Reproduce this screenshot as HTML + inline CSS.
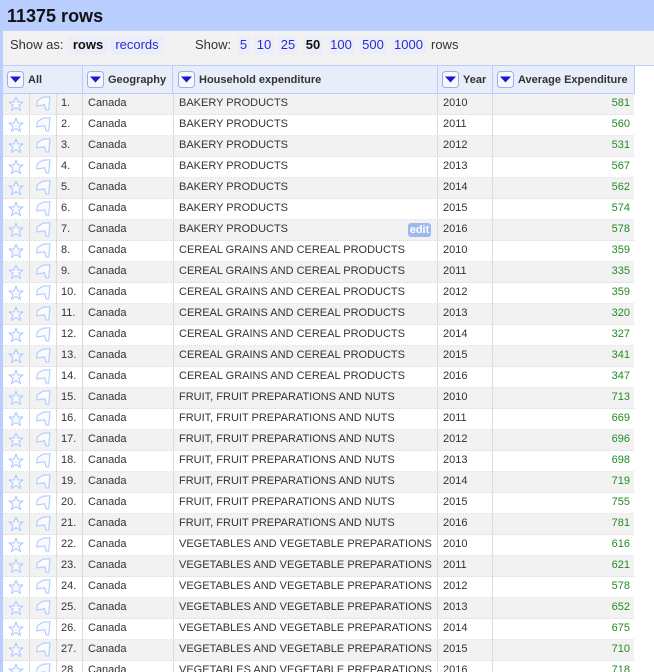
<!DOCTYPE html>
<html><head><meta charset="utf-8"><style>
html,body{margin:0;padding:0;background:#fff;overflow:hidden;width:654px;height:672px}
#w{left:0;top:0;width:654px;height:672px;overflow:hidden;font:11px/14px "Liberation Sans",Arial,sans-serif;color:#333}
div,span,b{position:absolute;white-space:nowrap}
#top{left:0;top:0;width:654px;height:31px;background:#b9cdff}
#left{left:0;top:31px;width:3px;height:641px;background:#b9cdff}
#title{left:7px;top:6px;font:bold 18px/20px "Liberation Sans",sans-serif;color:#111}
#bar{left:3px;top:31px;width:651px;height:34px;background:#f2f2f2;border-bottom:1px solid #b9cdff;font-size:13px;line-height:16px;color:#333}
#bar span{top:6px}
#bar .p{background:#ebedf8;border-radius:4px;color:#2a2ad8;top:5px;height:19px;line-height:18px;text-align:center}
#bar .c{background:#ebedf8;color:#111;font-weight:bold}
.h{top:66px;height:27px;background:#e9ecf9;border-bottom:1px solid #b9cdff;border-right:1px solid #b9cdff;font-weight:bold;line-height:28px;color:#333}
.h b{top:0}
.h svg{position:absolute;top:5px}
.r{left:3px;width:631px;height:20px;border-bottom:1px dotted #dcdcdc;line-height:17px}
.r span{top:1px}
.o{background:#f2f2f2}
.v{top:94px;height:578px;width:1px;background:#dcdcdc}
.r .i{left:5px;top:2px}.r .f{left:32px;top:2px}
.n{left:58px}.g{left:85px}.e{left:176px}.y{left:440px}.a{right:4px;color:#228b22}
svg{position:absolute;display:block}
#ed{left:408px;top:223px;width:23px;height:14px;background:#9db9ee;color:#fff;font-weight:bold;border-radius:3px;text-align:center;line-height:14px}
</style></head><body><div id="w">
<svg width="0" height="0" style="position:absolute"><defs>
<symbol id="s" viewBox="0 0 16 16"><path d="M8 1.2 10 6H15L11 9.2 12.6 14.500 8 11.500 3.400 14.500 5 9.200 1 6H6Z" fill="#f7f9ff" stroke="#a9c8ff" stroke-width="1" stroke-linejoin="round"/></symbol>
<symbol id="l" viewBox="0 0 16 16"><path d="M2.300 4.700 7.700 1.300 15 .7 13.700 14H11L9.700 8.700 1.700 10Z" fill="#f9fbff" stroke="#a9c8ff" stroke-width="1" stroke-linejoin="round"/></symbol>
<symbol id="d" viewBox="0 0 17 17"><rect x=".5" y=".5" width="16" height="16" rx="3" fill="#f8f9ff" stroke="#9aaef0"/><path d="M3 5.500H14L8.500 11.500Z" fill="#1818d0"/></symbol>
</defs></svg>
<div id="top"></div><div id="left"></div><div id="title">11375 rows</div>
<div id="bar"><span style="left:7px">Show as:</span><span class="p c" style="left:65px;width:40px">rows</span><span class="p" style="left:107px;width:54px">records</span><span style="left:192px">Show:</span><span class="p" style="left:234px;width:13px">5</span><span class="p" style="left:251px;width:20px">10</span><span class="p" style="left:275px;width:20px">25</span><span class="p c" style="left:300px;width:20px">50</span><span class="p" style="left:324px;width:28px">100</span><span class="p" style="left:356px;width:28px">500</span><span class="p" style="left:388px;width:35px">1000</span><span style="left:428px">rows</span></div>
<div class="h" style="left:3px;width:79px"><svg width="17" height="17" style="left:4px"><use href="#d"/></svg><b style="left:25px">All</b></div>
<div class="h" style="left:83px;width:89px"><svg width="17" height="17" style="left:4px"><use href="#d"/></svg><b style="left:25px">Geography</b></div>
<div class="h" style="left:173px;width:264px"><svg width="17" height="17" style="left:5px"><use href="#d"/></svg><b style="left:26px">Household expenditure</b></div>
<div class="h" style="left:438px;width:54px"><svg width="17" height="17" style="left:4px"><use href="#d"/></svg><b style="left:25px">Year</b></div>
<div class="h" style="left:493px;width:141px"><svg width="17" height="17" style="left:4px"><use href="#d"/></svg><b style="left:25px">Average Expenditure</b></div>
<div class="r o" style="top:94px"><span class="i"><svg width="16" height="16"><use href="#s"/></svg></span><span class="f"><svg width="16" height="16"><use href="#l"/></svg></span><span class="n">1.</span><span class="g">Canada</span><span class="e">BAKERY PRODUCTS</span><span class="y">2010</span><span class="a">581</span></div>
<div class="r" style="top:115px"><span class="i"><svg width="16" height="16"><use href="#s"/></svg></span><span class="f"><svg width="16" height="16"><use href="#l"/></svg></span><span class="n">2.</span><span class="g">Canada</span><span class="e">BAKERY PRODUCTS</span><span class="y">2011</span><span class="a">560</span></div>
<div class="r o" style="top:136px"><span class="i"><svg width="16" height="16"><use href="#s"/></svg></span><span class="f"><svg width="16" height="16"><use href="#l"/></svg></span><span class="n">3.</span><span class="g">Canada</span><span class="e">BAKERY PRODUCTS</span><span class="y">2012</span><span class="a">531</span></div>
<div class="r" style="top:157px"><span class="i"><svg width="16" height="16"><use href="#s"/></svg></span><span class="f"><svg width="16" height="16"><use href="#l"/></svg></span><span class="n">4.</span><span class="g">Canada</span><span class="e">BAKERY PRODUCTS</span><span class="y">2013</span><span class="a">567</span></div>
<div class="r o" style="top:178px"><span class="i"><svg width="16" height="16"><use href="#s"/></svg></span><span class="f"><svg width="16" height="16"><use href="#l"/></svg></span><span class="n">5.</span><span class="g">Canada</span><span class="e">BAKERY PRODUCTS</span><span class="y">2014</span><span class="a">562</span></div>
<div class="r" style="top:199px"><span class="i"><svg width="16" height="16"><use href="#s"/></svg></span><span class="f"><svg width="16" height="16"><use href="#l"/></svg></span><span class="n">6.</span><span class="g">Canada</span><span class="e">BAKERY PRODUCTS</span><span class="y">2015</span><span class="a">574</span></div>
<div class="r o" style="top:220px"><span class="i"><svg width="16" height="16"><use href="#s"/></svg></span><span class="f"><svg width="16" height="16"><use href="#l"/></svg></span><span class="n">7.</span><span class="g">Canada</span><span class="e">BAKERY PRODUCTS</span><span class="y">2016</span><span class="a">578</span></div>
<div class="r" style="top:241px"><span class="i"><svg width="16" height="16"><use href="#s"/></svg></span><span class="f"><svg width="16" height="16"><use href="#l"/></svg></span><span class="n">8.</span><span class="g">Canada</span><span class="e">CEREAL GRAINS AND CEREAL PRODUCTS</span><span class="y">2010</span><span class="a">359</span></div>
<div class="r o" style="top:262px"><span class="i"><svg width="16" height="16"><use href="#s"/></svg></span><span class="f"><svg width="16" height="16"><use href="#l"/></svg></span><span class="n">9.</span><span class="g">Canada</span><span class="e">CEREAL GRAINS AND CEREAL PRODUCTS</span><span class="y">2011</span><span class="a">335</span></div>
<div class="r" style="top:283px"><span class="i"><svg width="16" height="16"><use href="#s"/></svg></span><span class="f"><svg width="16" height="16"><use href="#l"/></svg></span><span class="n">10.</span><span class="g">Canada</span><span class="e">CEREAL GRAINS AND CEREAL PRODUCTS</span><span class="y">2012</span><span class="a">359</span></div>
<div class="r o" style="top:304px"><span class="i"><svg width="16" height="16"><use href="#s"/></svg></span><span class="f"><svg width="16" height="16"><use href="#l"/></svg></span><span class="n">11.</span><span class="g">Canada</span><span class="e">CEREAL GRAINS AND CEREAL PRODUCTS</span><span class="y">2013</span><span class="a">320</span></div>
<div class="r" style="top:325px"><span class="i"><svg width="16" height="16"><use href="#s"/></svg></span><span class="f"><svg width="16" height="16"><use href="#l"/></svg></span><span class="n">12.</span><span class="g">Canada</span><span class="e">CEREAL GRAINS AND CEREAL PRODUCTS</span><span class="y">2014</span><span class="a">327</span></div>
<div class="r o" style="top:346px"><span class="i"><svg width="16" height="16"><use href="#s"/></svg></span><span class="f"><svg width="16" height="16"><use href="#l"/></svg></span><span class="n">13.</span><span class="g">Canada</span><span class="e">CEREAL GRAINS AND CEREAL PRODUCTS</span><span class="y">2015</span><span class="a">341</span></div>
<div class="r" style="top:367px"><span class="i"><svg width="16" height="16"><use href="#s"/></svg></span><span class="f"><svg width="16" height="16"><use href="#l"/></svg></span><span class="n">14.</span><span class="g">Canada</span><span class="e">CEREAL GRAINS AND CEREAL PRODUCTS</span><span class="y">2016</span><span class="a">347</span></div>
<div class="r o" style="top:388px"><span class="i"><svg width="16" height="16"><use href="#s"/></svg></span><span class="f"><svg width="16" height="16"><use href="#l"/></svg></span><span class="n">15.</span><span class="g">Canada</span><span class="e">FRUIT, FRUIT PREPARATIONS AND NUTS</span><span class="y">2010</span><span class="a">713</span></div>
<div class="r" style="top:409px"><span class="i"><svg width="16" height="16"><use href="#s"/></svg></span><span class="f"><svg width="16" height="16"><use href="#l"/></svg></span><span class="n">16.</span><span class="g">Canada</span><span class="e">FRUIT, FRUIT PREPARATIONS AND NUTS</span><span class="y">2011</span><span class="a">669</span></div>
<div class="r o" style="top:430px"><span class="i"><svg width="16" height="16"><use href="#s"/></svg></span><span class="f"><svg width="16" height="16"><use href="#l"/></svg></span><span class="n">17.</span><span class="g">Canada</span><span class="e">FRUIT, FRUIT PREPARATIONS AND NUTS</span><span class="y">2012</span><span class="a">696</span></div>
<div class="r" style="top:451px"><span class="i"><svg width="16" height="16"><use href="#s"/></svg></span><span class="f"><svg width="16" height="16"><use href="#l"/></svg></span><span class="n">18.</span><span class="g">Canada</span><span class="e">FRUIT, FRUIT PREPARATIONS AND NUTS</span><span class="y">2013</span><span class="a">698</span></div>
<div class="r o" style="top:472px"><span class="i"><svg width="16" height="16"><use href="#s"/></svg></span><span class="f"><svg width="16" height="16"><use href="#l"/></svg></span><span class="n">19.</span><span class="g">Canada</span><span class="e">FRUIT, FRUIT PREPARATIONS AND NUTS</span><span class="y">2014</span><span class="a">719</span></div>
<div class="r" style="top:493px"><span class="i"><svg width="16" height="16"><use href="#s"/></svg></span><span class="f"><svg width="16" height="16"><use href="#l"/></svg></span><span class="n">20.</span><span class="g">Canada</span><span class="e">FRUIT, FRUIT PREPARATIONS AND NUTS</span><span class="y">2015</span><span class="a">755</span></div>
<div class="r o" style="top:514px"><span class="i"><svg width="16" height="16"><use href="#s"/></svg></span><span class="f"><svg width="16" height="16"><use href="#l"/></svg></span><span class="n">21.</span><span class="g">Canada</span><span class="e">FRUIT, FRUIT PREPARATIONS AND NUTS</span><span class="y">2016</span><span class="a">781</span></div>
<div class="r" style="top:535px"><span class="i"><svg width="16" height="16"><use href="#s"/></svg></span><span class="f"><svg width="16" height="16"><use href="#l"/></svg></span><span class="n">22.</span><span class="g">Canada</span><span class="e">VEGETABLES AND VEGETABLE PREPARATIONS</span><span class="y">2010</span><span class="a">616</span></div>
<div class="r o" style="top:556px"><span class="i"><svg width="16" height="16"><use href="#s"/></svg></span><span class="f"><svg width="16" height="16"><use href="#l"/></svg></span><span class="n">23.</span><span class="g">Canada</span><span class="e">VEGETABLES AND VEGETABLE PREPARATIONS</span><span class="y">2011</span><span class="a">621</span></div>
<div class="r" style="top:577px"><span class="i"><svg width="16" height="16"><use href="#s"/></svg></span><span class="f"><svg width="16" height="16"><use href="#l"/></svg></span><span class="n">24.</span><span class="g">Canada</span><span class="e">VEGETABLES AND VEGETABLE PREPARATIONS</span><span class="y">2012</span><span class="a">578</span></div>
<div class="r o" style="top:598px"><span class="i"><svg width="16" height="16"><use href="#s"/></svg></span><span class="f"><svg width="16" height="16"><use href="#l"/></svg></span><span class="n">25.</span><span class="g">Canada</span><span class="e">VEGETABLES AND VEGETABLE PREPARATIONS</span><span class="y">2013</span><span class="a">652</span></div>
<div class="r" style="top:619px"><span class="i"><svg width="16" height="16"><use href="#s"/></svg></span><span class="f"><svg width="16" height="16"><use href="#l"/></svg></span><span class="n">26.</span><span class="g">Canada</span><span class="e">VEGETABLES AND VEGETABLE PREPARATIONS</span><span class="y">2014</span><span class="a">675</span></div>
<div class="r o" style="top:640px"><span class="i"><svg width="16" height="16"><use href="#s"/></svg></span><span class="f"><svg width="16" height="16"><use href="#l"/></svg></span><span class="n">27.</span><span class="g">Canada</span><span class="e">VEGETABLES AND VEGETABLE PREPARATIONS</span><span class="y">2015</span><span class="a">710</span></div>
<div class="r" style="top:661px"><span class="i"><svg width="16" height="16"><use href="#s"/></svg></span><span class="f"><svg width="16" height="16"><use href="#l"/></svg></span><span class="n">28.</span><span class="g">Canada</span><span class="e">VEGETABLES AND VEGETABLE PREPARATIONS</span><span class="y">2016</span><span class="a">718</span></div>
<div class="v" style="left:29px"></div><div class="v" style="left:56px"></div><div class="v" style="left:82px"></div><div class="v" style="left:173px"></div><div class="v" style="left:437px"></div><div class="v" style="left:492px"></div>
<div id="ed">edit</div>
</div></body></html>
